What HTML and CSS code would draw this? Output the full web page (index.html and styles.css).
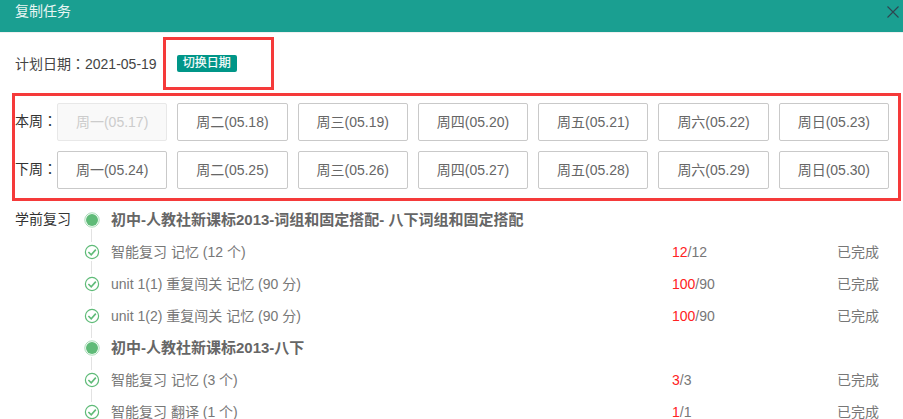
FILE: index.html
```html
<!DOCTYPE html>
<html lang="zh-CN">
<head>
<meta charset="utf-8">
<title>复制任务</title>
<link rel="stylesheet" href="styles.css">
</head>
<body>
<svg class="defs" width="0" height="0" aria-hidden="true">
  <symbol id="done" viewBox="0 0 16 16">
    <circle cx="8" cy="8" r="6.6" fill="none" stroke="#5fbb78" stroke-width="1.2"/>
    <path d="M4.4 8 7.2 10.8 11.8 5.6" fill="none" stroke="#5fbb78" stroke-width="1.6"/>
  </symbol>
  <symbol id="dot" viewBox="0 0 16 16">
    <circle cx="8" cy="8" r="7.2" fill="none" stroke="#a9dcb8" stroke-width="1"/>
    <circle cx="8" cy="8" r="6" fill="#5fbb78"/>
  </symbol>
</svg>
<header class="head">
  <h1 class="title">复制任务</h1>
  <svg class="close" width="12" height="12" viewBox="0 0 12 12" aria-label="关闭"><path d="M.5.5 11.5 11.5M11.5.5.5 11.5" stroke="#2f4550" stroke-width="1.1" fill="none"/></svg>
</header>
<section class="date-row">
  <span>计划日期<span class="colon" lang="zh-Hant">：</span>2021-05-19</span>
  <span class="badge">切换日期</span>
  <span class="mark"></span>
</section>
<section class="weeks">
  <div class="week">
    <span class="week-label">本周<span class="colon" lang="zh-Hant">：</span></span>
    <div class="days">
      <button class="day is-disabled">周一(05.17)</button>
      <button class="day">周二(05.18)</button>
      <button class="day">周三(05.19)</button>
      <button class="day">周四(05.20)</button>
      <button class="day">周五(05.21)</button>
      <button class="day">周六(05.22)</button>
      <button class="day">周日(05.23)</button>
    </div>
  </div>
  <div class="week">
    <span class="week-label">下周<span class="colon" lang="zh-Hant">：</span></span>
    <div class="days">
      <button class="day">周一(05.24)</button>
      <button class="day">周二(05.25)</button>
      <button class="day">周三(05.26)</button>
      <button class="day">周四(05.27)</button>
      <button class="day">周五(05.28)</button>
      <button class="day">周六(05.29)</button>
      <button class="day">周日(05.30)</button>
    </div>
  </div>
</section>
<section class="plan">
  <div class="row first">
    <span class="row-label">学前复习</span>
    <svg class="node"><use href="#dot"/></svg>
    <strong class="book">初中-人教社新课标2013-词组和固定搭配- 八下词组和固定搭配</strong>
  </div>
  <div class="row">
    <span class="row-label"></span>
    <svg class="node"><use href="#done"/></svg>
    <span class="task">智能复习 记忆 (12 个)</span>
    <span class="score"><em>12</em>/12</span>
    <span class="state">已完成</span>
  </div>
  <div class="row">
    <span class="row-label"></span>
    <svg class="node"><use href="#done"/></svg>
    <span class="task">unit 1(1) 重复闯关 记忆 (90 分)</span>
    <span class="score"><em>100</em>/90</span>
    <span class="state">已完成</span>
  </div>
  <div class="row">
    <span class="row-label"></span>
    <svg class="node"><use href="#done"/></svg>
    <span class="task">unit 1(2) 重复闯关 记忆 (90 分)</span>
    <span class="score"><em>100</em>/90</span>
    <span class="state">已完成</span>
  </div>
  <div class="row">
    <span class="row-label"></span>
    <svg class="node"><use href="#dot"/></svg>
    <strong class="book">初中-人教社新课标2013-八下</strong>
  </div>
  <div class="row">
    <span class="row-label"></span>
    <svg class="node"><use href="#done"/></svg>
    <span class="task">智能复习 记忆 (3 个)</span>
    <span class="score"><em>3</em>/3</span>
    <span class="state">已完成</span>
  </div>
  <div class="row">
    <span class="row-label"></span>
    <svg class="node"><use href="#done"/></svg>
    <span class="task">智能复习 翻译 (1 个)</span>
    <span class="score"><em>1</em>/1</span>
    <span class="state">已完成</span>
  </div>
</section>
</body>
</html>
```
FILE: styles.css
```css
* { box-sizing: border-box; }
html, body { height: 100%; }
body {
  margin: 0;
  overflow: hidden;
  background: #fff;
  color: #333;
  font: 14px/20px "Liberation Sans", "Noto Sans CJK SC", sans-serif;
}
.defs { position: absolute; }
.colon {
  font-family: "Noto Sans CJK TC", sans-serif;
  text-spacing-trim: space-all;
}

.head {
  display: flex;
  align-items: center;
  justify-content: space-between;
  height: 33px;
  padding: 0 4px 10px 15px;
  background: #1a9f91;
  border-bottom: 1px solid #f0f0f0;
}
.title {
  margin: 0;
  font-size: 14px;
  font-weight: 400;
  line-height: 20px;
  color: #e8f5f3;
}
.close { margin-top: 2px; }

.date-row {
  position: relative;
  display: flex;
  align-items: center;
  gap: 20px;
  height: 60px;
  padding-left: 15px;
  color: #444;
}
.badge {
  height: 17px;
  padding: 0 6px;
  border-radius: 2px;
  background: #009688;
  color: #fff;
  font-size: 12px;
  line-height: 17px;
  font-weight: 400;
  -webkit-text-stroke: .2px #fff;
}
.mark {
  position: absolute;
  left: 163px;
  top: 4px;
  width: 111px;
  height: 53px;
  border: 3px solid #f53a3a;
}

.weeks {
  display: flex;
  flex-direction: column;
  gap: 10px;
  width: 889px;
  height: 108px;
  margin-left: 12px;
  padding: 7px 9px 9px 0;
  border: 3px solid #f53a3a;
}
.week { display: flex; align-items: center; }
.week-label {
  flex: 0 0 42px;
  margin-top: -3px;
  white-space: nowrap;
  color: #333;
}
.days {
  flex: 1;
  display: grid;
  grid-template-columns: repeat(7, 1fr);
  gap: 10px;
}
.day {
  height: 38px;
  padding: 0;
  border: 1px solid #c9c9c9;
  border-radius: 2px;
  background: #fff;
  color: #666;
  font: inherit;
}
.day.is-disabled {
  border-color: #e8e8e8;
  background: #f9f9f9;
  color: #ccc;
}

.plan { margin-top: 3px; }
.row {
  position: relative;
  display: flex;
  align-items: center;
  height: 32px;
  padding-left: 15px;
  color: #777;
}
.row-label { flex: 0 0 69px; margin-top: -2px; color: #333; }
.node { flex: 0 0 16px; width: 16px; height: 16px; margin-right: 11px; }
.row:not(.first)::before {
  content: "";
  position: absolute;
  left: 91px;
  top: -7px;
  width: 1px;
  height: 13px;
  background: #e2e2e2;
}
.book { font-size: 15px; font-weight: 700; color: #666; }
.task { flex: 0 0 561px; }
.score { flex: 0 0 165px; }
.score em { font-style: normal; color: #f22; }
.state { white-space: nowrap; }
```
